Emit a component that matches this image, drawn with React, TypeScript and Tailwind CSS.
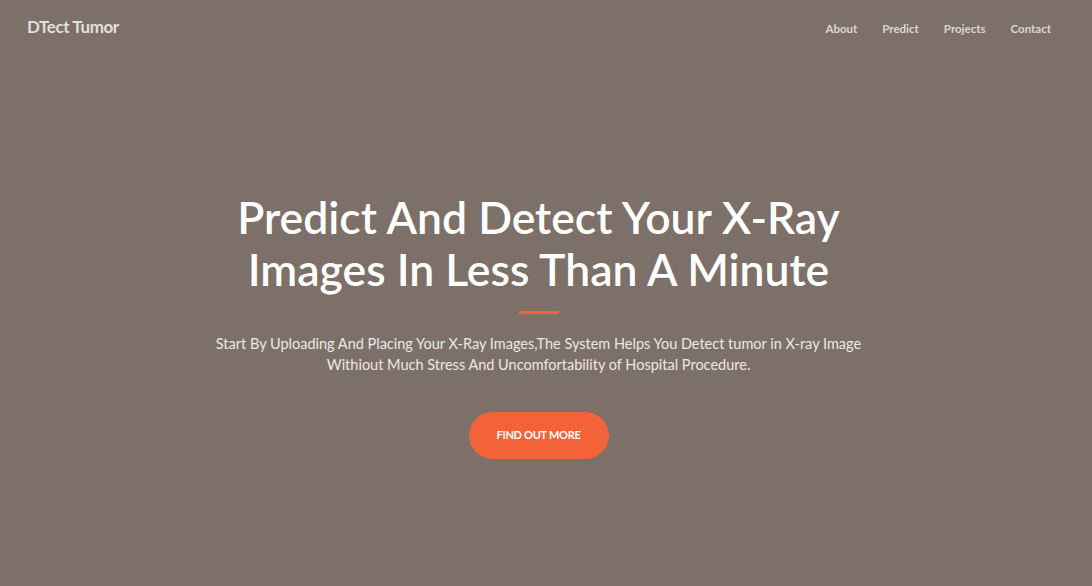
export default function App() {
  const links = ['About', 'Predict', 'Projects', 'Contact']

  return (
    <div className="min-h-[586px] w-full bg-[#7c7068] font-['Lato',sans-serif] flex flex-col pr-[15px]">
      <nav className="flex items-center justify-between pl-[27px] pr-[26px] h-[53px]">
        <a className="text-[17px] font-bold text-[#e4dfdc] tracking-tight">DTect Tumor</a>
        <ul className="flex items-center gap-[25px]">
          {links.map((link) => (
            <li key={link}>
              <a className="text-[11.5px] font-bold text-[#ddd6d2]">{link}</a>
            </li>
          ))}
        </ul>
      </nav>

      <header className="flex flex-col items-center text-center pt-[138px]">
        <h1 className="text-[44.5px] leading-[52px] font-semibold text-white w-[680px]">
          Predict And Detect Your X-Ray Images In Less Than A Minute
        </h1>
        <hr className="w-[40px] border-t-[3px] border-[#f4623a] mt-[16px] mb-[19px]" />
        <p className="text-[14.5px] leading-[21px] text-[#ece8e5] w-[680px]">
          Start By Uploading And Placing Your X-Ray Images,The System Helps You Detect tumor in X-ray Image
          Withiout Much Stress And Uncomfortability of Hospital Procedure.
        </p>
        <a className="mt-[37px] w-[140px] h-[47px] rounded-full bg-[#f4623a] flex items-center justify-center text-[11px] font-bold text-white uppercase tracking-tight">
          Find Out More
        </a>
      </header>
    </div>
  )
}
